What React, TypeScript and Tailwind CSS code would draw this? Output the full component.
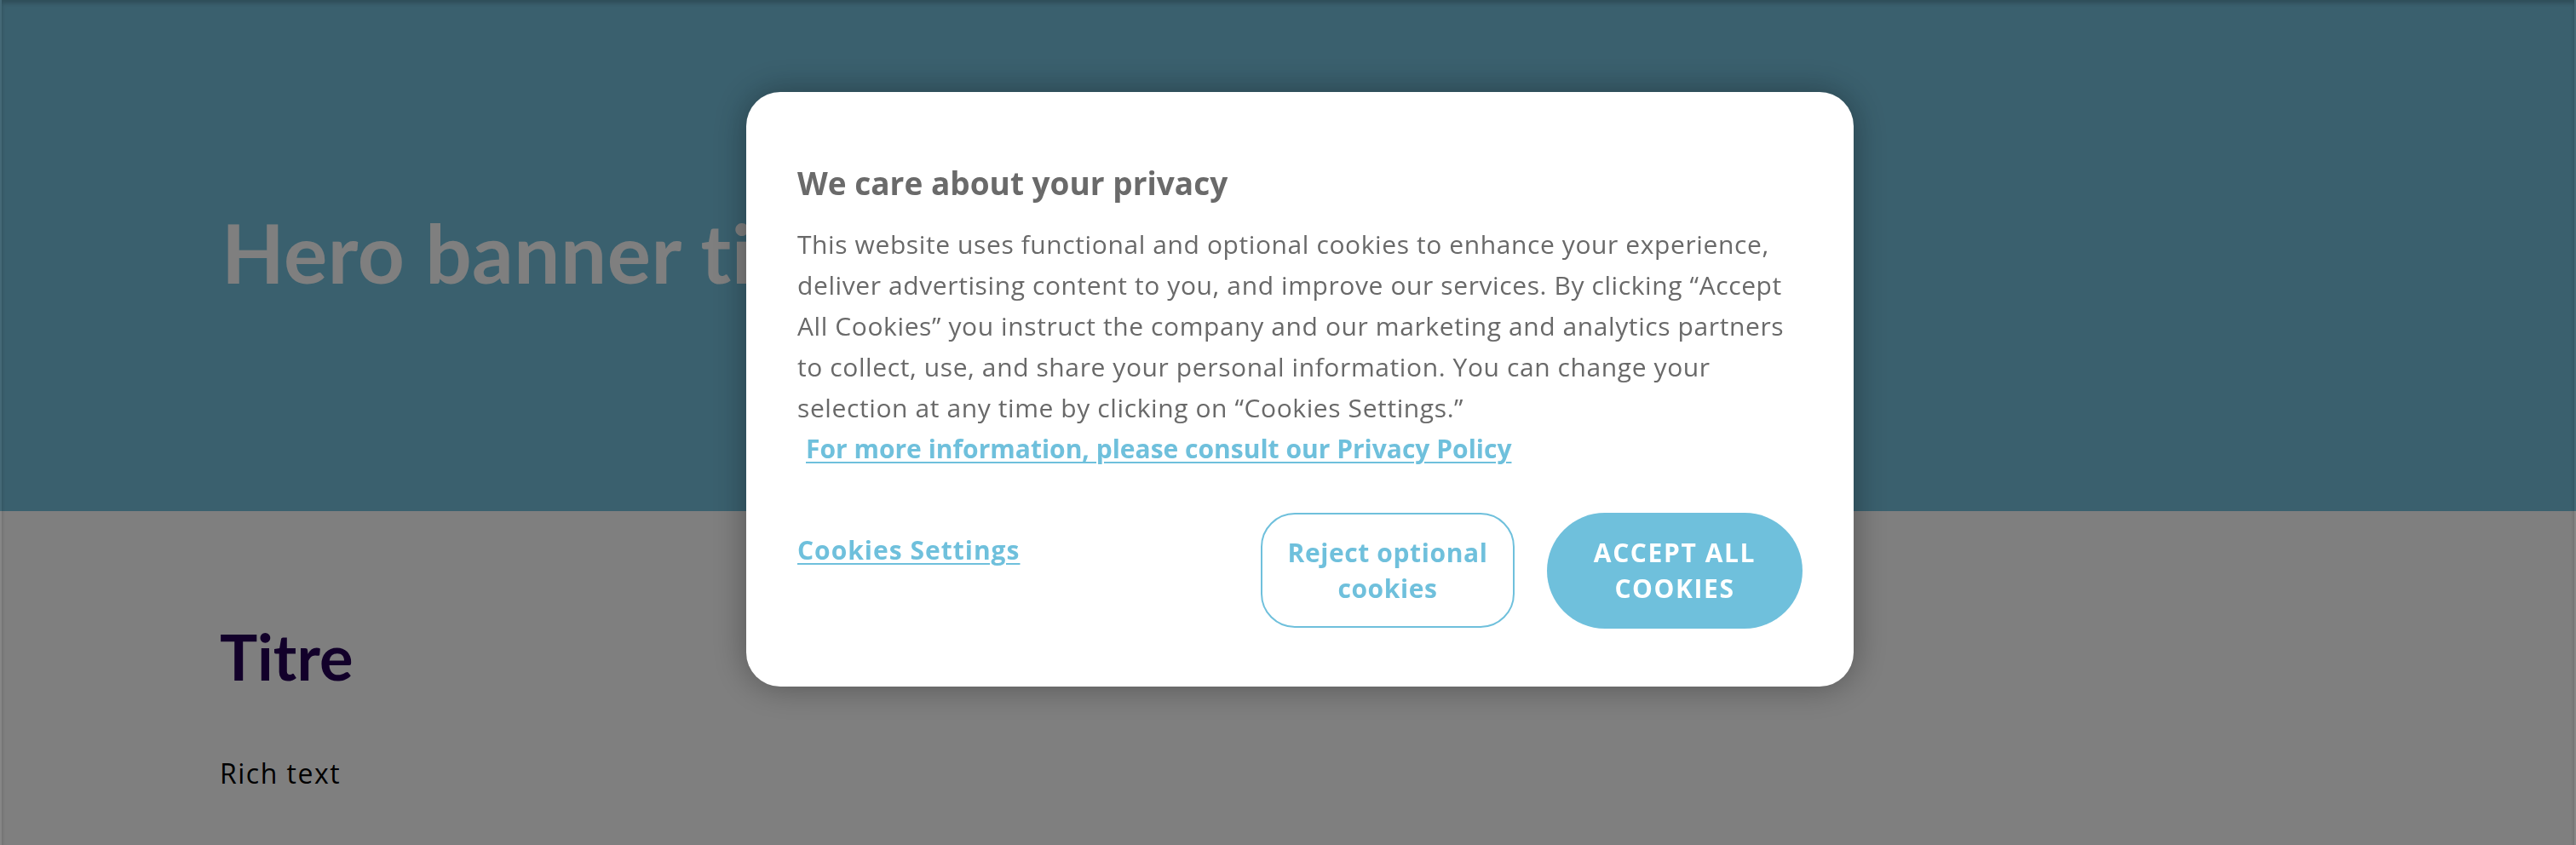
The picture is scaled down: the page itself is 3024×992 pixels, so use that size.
import React from "react";

const font = "font-['Open_Sans','Liberation_Sans',sans-serif]";
const headFont = "font-['Lato','Liberation_Sans',sans-serif]";

function PageContent() {
  return (
    <div className="flex flex-col">
      {/* Hero */}
      <section className="h-[600px] bg-[#75c1dd] pl-[260px] pt-[248px]">
        <h1 className={`${headFont} text-[96px] font-bold leading-none tracking-[0.5px] text-white`}>Hero banner title</h1>
      </section>

      {/* Body */}
      <section className="flex flex-col pl-[258px] pt-[134px]">
        <h2 className={`${headFont} text-[74px] font-bold leading-none text-[#240054]`}>Titre</h2>
        <p className="mt-[76px] text-[32px] leading-[48px] tracking-[1.5px] text-black">Rich text</p>
      </section>
    </div>
  );
}

function CookieBanner() {
  return (
    <div className="fixed left-[876px] top-[108px] w-[1300px] rounded-[40px] bg-white px-[60px] pt-[83px] pb-[68px] shadow-[0_0_40px_rgba(0,0,0,0.35)]">
      <h3 className="text-[37px] font-bold leading-[48px] text-[#6a6a6a]">We care about your privacy</h3>
      <p className="mt-[24px] text-[30px] leading-[48px] tracking-[0.6px] text-[#696969]">
        This website uses functional and optional cookies to enhance your experience, deliver advertising content to
        you, and improve our services. By clicking “Accept All Cookies” you instruct the company and our marketing and
        analytics partners to collect, use, and share your personal information. You can change your selection at any
        time by clicking on “Cookies Settings.”
      </p>
      <a className="ml-[10px] block text-[30px] font-bold leading-[48px] text-[#6fc0dc] underline decoration-2 underline-offset-4">
        For more information, please consult our Privacy Policy
      </a>

      <div className="mt-[51px] flex items-start">
        <a className="pt-[23px] text-[30px] font-bold leading-[42px] tracking-[1px] text-[#6fc0dc] underline decoration-2 underline-offset-4">
          Cookies Settings
        </a>
        <div className="ml-auto flex gap-[38px]">
          <button className="h-[135px] w-[298px] rounded-[40px] border-2 border-[#6fc0dc] bg-white px-2 text-[30px] font-bold leading-[42px] tracking-[0.6px] text-[#6fc0dc]">
            Reject optional
            <br />
            cookies
          </button>
          <button className="h-[136px] w-[300px] rounded-full bg-[#6fc0dc] px-2 text-[30px] font-bold leading-[42px] tracking-[1.6px] text-white">
            ACCEPT ALL
            <br />
            COOKIES
          </button>
        </div>
      </div>
    </div>
  );
}

export default function App() {
  return (
    <div className={`relative min-h-[992px] overflow-hidden bg-white ${font}`}>
      <PageContent />
      <div className="fixed inset-0 border-x-2 border-white/5 bg-black/50 shadow-[inset_0_4px_5px_rgba(0,0,0,0.2)]" />
      <CookieBanner />
    </div>
  );
}
